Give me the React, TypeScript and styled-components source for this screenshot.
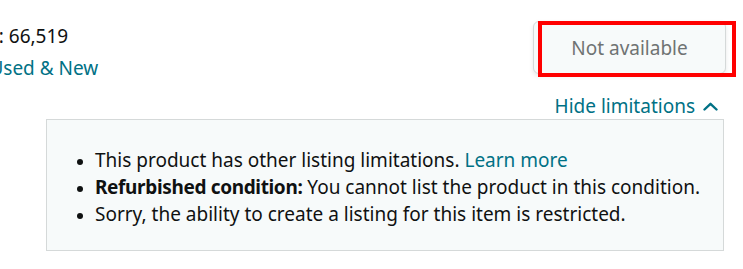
import React from "react";
import styled, { createGlobalStyle } from "styled-components";

const GlobalStyle = createGlobalStyle`
  body {
    margin: 0;
    background: #ffffff;
    font-family: "Noto Sans", "Open Sans", Arial, sans-serif;
    color: #0f1111;
    overflow: hidden;
  }
`;

const Page = styled.div`
  width: 743px;
  height: 269px;
  overflow: hidden;
  padding-top: 21px;
  box-sizing: border-box;
`;

const TopRow = styled.div`
  display: flex;
  justify-content: space-between;
  align-items: flex-start;
  padding-right: 17px;
`;

const Stats = styled.div`
  display: flex;
  flex-direction: column;
  gap: 5px;
  padding-top: 2px;
  margin-left: -92px;
  font-size: 19px;
  line-height: 27px;
`;

const StatLine = styled.span<{ $link?: boolean }>`
  color: ${(p) => (p.$link ? "#007185" : "#0f1111")};
  white-space: nowrap;
`;

const ButtonWrap = styled.div`
  position: relative;
`;

const DisabledButton = styled.button`
  width: 193px;
  height: 53px;
  border: 1px solid #d5d9d9;
  border-radius: 6px;
  background: #f7fafa;
  box-shadow: 0 2px 4px rgba(213, 217, 217, 0.6);
  color: #6f7373;
  font-family: inherit;
  font-size: 19px;
  cursor: not-allowed;
`;

const Highlight = styled.div`
  position: absolute;
  top: 0;
  left: 5px;
  right: -10px;
  bottom: -3px;
  border: 4px solid #ff0000;
  pointer-events: none;
`;

const ToggleRow = styled.div`
  display: flex;
  justify-content: flex-end;
  padding-right: 25px;
  margin-top: 12px;
`;

const Toggle = styled.a`
  display: flex;
  align-items: center;
  gap: 8px;
  color: #007185;
  font-size: 19px;
  line-height: 24px;
  text-decoration: none;
  cursor: pointer;
`;

const LimitBox = styled.div`
  margin: 1px 0 0 46px;
  width: 678px;
  box-sizing: border-box;
  background: #f7fafa;
  border: 1px solid #d5d9d9;
  padding: 27px 10px 22px 48px;
`;

const List = styled.ul`
  margin: 0;
  padding: 0;
  font-size: 19px;
  line-height: 27px;
`;

const Item = styled.li`
  white-space: nowrap;

  &::marker {
    font-size: 16px;
  }

  strong {
    letter-spacing: -0.35px;
  }
`;

const LinkText = styled.a`
  color: #007185;
  text-decoration: none;
`;

const Chevron = () => (
  <svg width="15" height="9" viewBox="0 0 15 9" fill="none">
    <path d="M1.5 7.5L7.5 1.8L13.5 7.5" stroke="#007185" strokeWidth="2.4" strokeLinecap="round" strokeLinejoin="round" />
  </svg>
);

export default function App() {
  return (
    <Page>
      <GlobalStyle />
      <TopRow>
        <Stats>
          <StatLine>Sales rank: 66,519</StatLine>
          <StatLine $link>Offers: 1 Used &amp; New</StatLine>
        </Stats>
        <ButtonWrap>
          <DisabledButton disabled>Not available</DisabledButton>
          <Highlight />
        </ButtonWrap>
      </TopRow>
      <ToggleRow>
        <Toggle>
          Hide limitations
          <Chevron />
        </Toggle>
      </ToggleRow>
      <LimitBox>
        <List>
          <Item>
            This product has other listing limitations. <LinkText>Learn more</LinkText>
          </Item>
          <Item>
            <strong>Refurbished condition:</strong> You cannot list the product in this condition.
          </Item>
          <Item>Sorry, the ability to create a listing for this item is restricted.</Item>
        </List>
      </LimitBox>
    </Page>
  );
}
